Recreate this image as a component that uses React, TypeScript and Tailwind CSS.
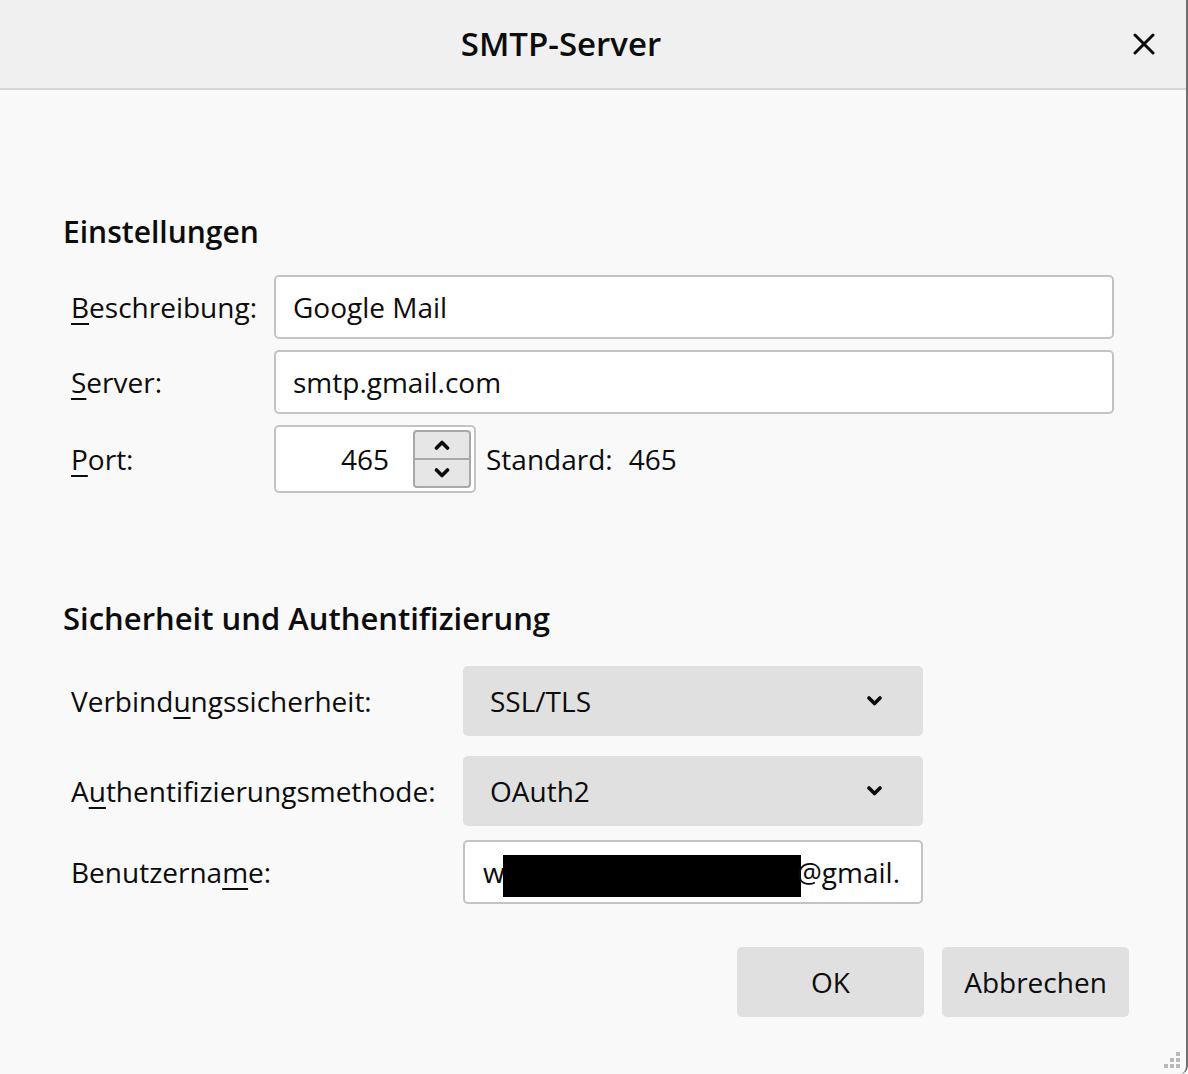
import { useState } from "react";

const font = { fontFamily: '"Open Sans", "Noto Sans", sans-serif' };

function Chevron({ up = false, className = "" }: { up?: boolean; className?: string }) {
  return (
    <svg viewBox="0 0 16 10" className={className} fill="none" stroke="currentColor" strokeWidth={3.6} strokeLinecap="round" strokeLinejoin="round">
      {up ? <path d="M2.5 8 L8 2.5 L13.5 8" /> : <path d="M2.5 2 L8 7.5 L13.5 2" />}
    </svg>
  );
}

function Label({ text, u }: { text: string; u: number }) {
  return (
    <span>
      {text.slice(0, u)}
      <span className="underline underline-offset-[5px] decoration-[2px]">{text[u]}</span>
      {text.slice(u + 1)}
    </span>
  );
}

function Select({ value }: { value: string }) {
  return (
    <div className="flex h-[70px] w-[460px] items-center justify-between rounded-[5px] bg-[#e0e0e0] pl-[27px] pr-[40px]">
      <span>{value}</span>
      <Chevron className="h-[10px] w-[17px] text-[#0c0c0d]" />
    </div>
  );
}

export default function App() {
  const [port] = useState("465");
  return (
    <div style={font} className="relative h-[1074px] w-[1188px] overflow-hidden rounded-br-[8px] border-r-2 border-[#6f6f6f] bg-[#f9f9f9] text-[28px] text-[#0c0c0d]">
      {/* title bar */}
      <div className="relative flex h-[90px] items-center justify-center border-b-2 border-[#d7d7db] bg-[#f0f0f0] pr-[64px]">
        <span className="text-[33px] font-semibold">SMTP-Server</span>
        <button className="absolute right-[31px] top-[33px] h-[22px] w-[22px]">
          <svg viewBox="0 0 22 22" className="h-full w-full" stroke="#0c0c0d" strokeWidth={3} strokeLinecap="round">
            <path d="M2 2 L20 20 M20 2 L2 20" />
          </svg>
        </button>
      </div>

      <div className="flex flex-col pl-[63px]">
        {/* Einstellungen */}
        <h2 className="mt-[121px] text-[30px] font-semibold leading-[42px]">Einstellungen</h2>
        <div className="mt-[22px] grid grid-cols-[203px_840px] items-center gap-y-[11px] pl-[8px]">
          <Label text="Beschreibung:" u={0} />
          <div className="flex h-[64px] items-center rounded-[5px] border-2 border-[#c3c3c3] bg-white px-[17px]">Google Mail</div>
          <Label text="Server:" u={0} />
          <div className="flex h-[64px] items-center rounded-[5px] border-2 border-[#c3c3c3] bg-white px-[17px]">smtp.gmail.com</div>
          <Label text="Port:" u={0} />
          <div className="flex items-center">
            <div className="flex h-[68px] w-[202px] items-center rounded-[5px] border-2 border-[#c3c3c3] bg-white pl-[4px] pr-[3px]">
              <span className="flex-1 pr-[24px] text-right">{port}</span>
              <div className="flex h-[58px] w-[58px] flex-col overflow-hidden rounded-[4px] border-2 border-[#a8a8a8] bg-[#e6e6e6]">
                <div className="flex flex-1 items-center justify-center border-b-2 border-[#a8a8a8]">
                  <Chevron up className="h-[10px] w-[16px]" />
                </div>
                <div className="flex flex-1 items-center justify-center">
                  <Chevron className="h-[10px] w-[16px]" />
                </div>
              </div>
            </div>
            <span className="ml-[10px]">Standard:</span>
            <span className="ml-[16px]">465</span>
          </div>
        </div>

        {/* Sicherheit */}
        <h2 className="mt-[104px] text-[31px] font-semibold leading-[42px]">Sicherheit und Authentifizierung</h2>
        <div className="mt-[27px] grid grid-cols-[392px_460px] items-center pl-[8px]">
          <Label text="Verbindungssicherheit:" u={7} />
          <Select value="SSL/TLS" />
          <div className="col-span-2 h-[20px]" />
          <Label text="Authentifizierungsmethode:" u={1} />
          <Select value="OAuth2" />
          <div className="col-span-2 h-[14px]" />
          <Label text="Benutzername:" u={10} />
          <div className="flex h-[64px] w-[460px] items-center overflow-hidden whitespace-nowrap rounded-[5px] border-2 border-[#c3c3c3] bg-white pl-[18px] pr-[14px]">
            <span>w</span>
            <span className="ml-[-2px] mr-[-4px] mt-[8px] inline-block h-[42px] w-[298px] shrink-0 bg-black" />
            <span>@gmail.</span>
          </div>
        </div>

        {/* buttons */}
        <div className="mt-[43px] flex justify-end gap-[18px] pr-[57px]">
          <button className="h-[70px] w-[187px] rounded-[5px] bg-[#e0e0e0]">OK</button>
          <button className="h-[70px] w-[187px] rounded-[5px] bg-[#e0e0e0]">Abbrechen</button>
        </div>
      </div>

      {/* resize grip */}
      <div className="absolute bottom-[6px] right-[6px] grid grid-cols-3 gap-[2px]">
        {[0, 0, 1, 0, 1, 1, 1, 1, 1].map((v, i) => (
          <span key={i} className={v ? "h-[4px] w-[4px] bg-[#b9b9b9]" : "h-[4px] w-[4px]"} />
        ))}
      </div>
    </div>
  );
}
